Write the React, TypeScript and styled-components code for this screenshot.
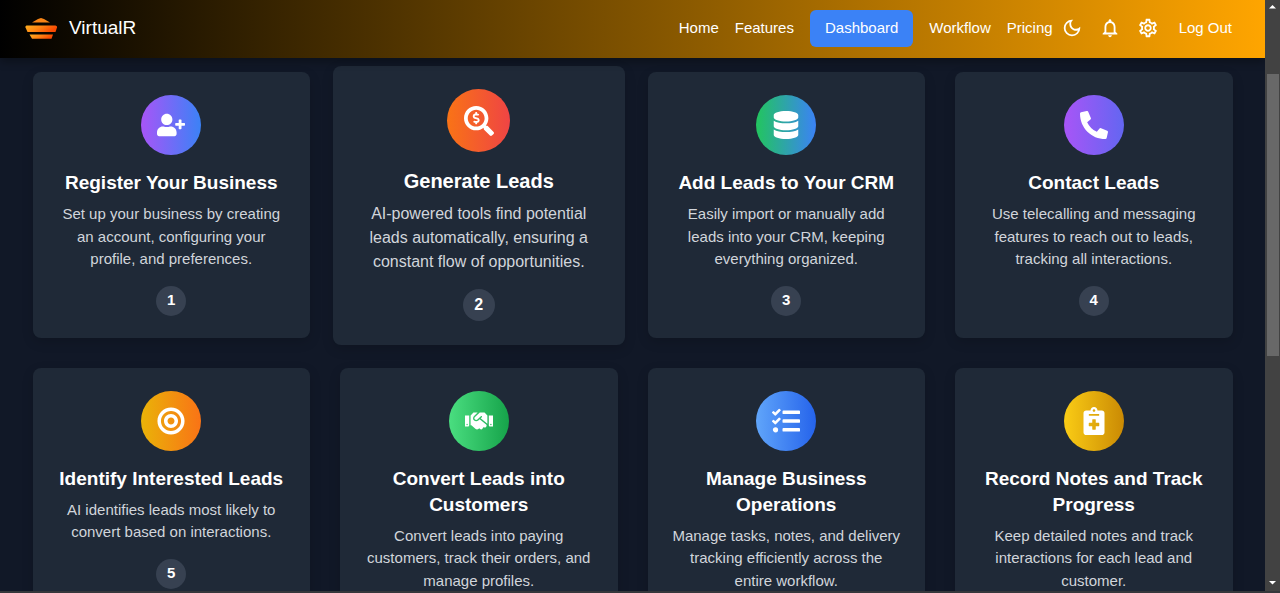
import React from "react";
import styled, { createGlobalStyle } from "styled-components";
import {
  FaBullseye,
  FaDatabase,
  FaHandshake,
  FaNotesMedical,
  FaPhoneAlt,
  FaSearchDollar,
  FaTasks,
  FaUserPlus,
} from "react-icons/fa";
import {
  MdNotificationsNone,
  MdOutlineDarkMode,
  MdOutlineSettings,
} from "react-icons/md";
import type { IconType } from "react-icons";

const GlobalStyle = createGlobalStyle`
  *, *::before, *::after { box-sizing: border-box; }
  body {
    margin: 0;
    background: #111827;
    color: #ffffff;
    font-family: "Liberation Sans", Arial, sans-serif;
    font-size: 15px;
    line-height: 1.5;
  }
  h3, p { margin: 0; }
`;

const Window = styled.div`
  display: flex;
  height: 100vh;
  overflow: hidden;
  border-bottom: 2px solid #35373b;
`;

const Page = styled.div`
  flex: 1;
  min-width: 0;
  display: flex;
  flex-direction: column;
  overflow: hidden;
`;

const Header = styled.header`
  z-index: 1;
  flex: none;
  display: flex;
  align-items: center;
  justify-content: space-between;
  height: 58px;
  padding: 0 33px 2px 24px;
  background: linear-gradient(to right, #000000, #ffa500);
  box-shadow: 0 4px 8px rgba(0, 0, 0, 0.3);
`;

const Brand = styled.a`
  display: flex;
  align-items: center;
  gap: 11px;
  color: #ffffff;
  font-size: 19px;
  line-height: 26px;
  text-decoration: none;
`;

const Nav = styled.nav`
  display: flex;
  align-items: center;
`;

const NavLinks = styled.div`
  display: flex;
  align-items: center;
  gap: 16px;
`;

const NavLink = styled.a<{ $active?: boolean }>`
  color: #ffffff;
  line-height: 22px;
  text-decoration: none;
  padding: ${(p) => (p.$active ? "7px 15px 8px" : "0")};
  border-radius: 6px;
  background: ${(p) => (p.$active ? "#3b82f6" : "transparent")};
`;

const Actions = styled.div`
  display: flex;
  align-items: center;
  gap: 16px;
  margin: 0 20px 0 8px;
`;

const ActionButton = styled.button`
  display: flex;
  padding: 0;
  border: 0;
  background: none;
  color: #ffffff;
  font: inherit;
  line-height: 22px;
  cursor: pointer;
`;

const Steps = styled.main`
  width: 100%;
  max-width: 1200px;
  margin: 0 auto;
  padding: 14px 0;
  display: grid;
  grid-template-columns: repeat(4, minmax(0, 1fr));
  gap: 30px;
`;

const Badge = styled.span`
  display: flex;
  align-items: center;
  justify-content: center;
  width: 30px;
  height: 30px;
  margin-top: 15px;
  border-radius: 50%;
  background: #374151;
  font-weight: 700;
`;

const IconDisc = styled.div<{ $from: string; $to: string }>`
  display: flex;
  align-items: center;
  justify-content: center;
  width: 60px;
  height: 60px;
  border-radius: 50%;
  background: linear-gradient(to right, ${(p) => p.$from}, ${(p) => p.$to});
  font-size: 28px;
`;

const Title = styled.h3`
  margin-top: 15px;
  font-size: 19px;
  line-height: 26px;
  font-weight: 700;
`;

const Description = styled.p`
  margin-top: 7px;
  color: #d1d5db;
`;

const Card = styled.article<{ $raised?: boolean }>`
  display: flex;
  flex-direction: column;
  align-items: center;
  padding: 23px 23px 22px;
  border-radius: 8px;
  background: #1f2937;
  box-shadow: 0 4px 12px rgba(0, 0, 0, 0.15);
  text-align: center;

  ${(p) =>
    p.$raised &&
    `
    margin: -6px -7px -7px;

    ${IconDisc} {
      width: 63px;
      height: 63px;
      font-size: 30px;
    }
    ${Title} {
      font-size: 20px;
      line-height: 28px;
    }
    ${Description} {
      font-size: 16px;
      line-height: 24px;
    }
    ${Badge} {
      width: 32px;
      height: 32px;
      font-size: 16px;
    }
  `}
`;

const ScrollRail = styled.div`
  flex: none;
  width: 15px;
  display: flex;
  flex-direction: column;
  align-items: center;
  background: #424242;
`;

const RailArrow = styled.svg`
  flex: none;
  width: 15px;
  height: 15px;
  fill: #ffffff;
`;

const RailTrack = styled.div`
  flex: 1;
  width: 12px;
  display: grid;
  grid-template-rows: 59fr 282fr 220fr;
`;

const RailThumb = styled.div`
  grid-row: 2;
  background: #686868;
`;

const Logo = () => (
  <svg width="34" height="28" viewBox="0 0 34 28" aria-hidden="true">
    <defs>
      <linearGradient id="logo" x1="0" y1="0" x2="1" y2="0.3">
        <stop offset="0" stopColor="#ffb020" />
        <stop offset="0.5" stopColor="#ff8412" />
        <stop offset="1" stopColor="#f94a02" />
      </linearGradient>
    </defs>
    <path d="M17 4 L20 5 L26 8.6 H8 L14 5 Z" fill="#f98516" />
    <path d="M2.5 11.5 H31.5 Q33.5 12 33 13.5 L31.5 18 H3.5 L1.5 13.5 Q1 12 2.5 11.5 Z" fill="url(#logo)" />
    <path d="M5.5 20.5 H29 L27.5 24.7 H8 Z" fill="url(#logo)" />
  </svg>
);

interface Step {
  title: string;
  text: string;
  icon: IconType;
  from: string;
  to: string;
  raised?: boolean;
}

const steps: Step[] = [
  {
    title: "Register Your Business",
    text: "Set up your business by creating an account, configuring your profile, and preferences.",
    icon: FaUserPlus,
    from: "#a855f7",
    to: "#3b82f6",
  },
  {
    title: "Generate Leads",
    text: "AI-powered tools find potential leads automatically, ensuring a constant flow of opportunities.",
    icon: FaSearchDollar,
    from: "#f97316",
    to: "#ef4444",
    raised: true,
  },
  {
    title: "Add Leads to Your CRM",
    text: "Easily import or manually add leads into your CRM, keeping everything organized.",
    icon: FaDatabase,
    from: "#22c55e",
    to: "#3b82f6",
  },
  {
    title: "Contact Leads",
    text: "Use telecalling and messaging features to reach out to leads, tracking all interactions.",
    icon: FaPhoneAlt,
    from: "#a855f7",
    to: "#6366f1",
  },
  {
    title: "Identify Interested Leads",
    text: "AI identifies leads most likely to convert based on interactions.",
    icon: FaBullseye,
    from: "#eab308",
    to: "#f97316",
  },
  {
    title: "Convert Leads into Customers",
    text: "Convert leads into paying customers, track their orders, and manage profiles.",
    icon: FaHandshake,
    from: "#4ade80",
    to: "#16a34a",
  },
  {
    title: "Manage Business Operations",
    text: "Manage tasks, notes, and delivery tracking efficiently across the entire workflow.",
    icon: FaTasks,
    from: "#60a5fa",
    to: "#2563eb",
  },
  {
    title: "Record Notes and Track Progress",
    text: "Keep detailed notes and track interactions for each lead and customer.",
    icon: FaNotesMedical,
    from: "#facc15",
    to: "#ca8a04",
  },
];

const links = ["Home", "Features", "Dashboard", "Workflow", "Pricing"];

export default function App() {
  return (
    <>
      <GlobalStyle />
      <Window>
        <Page>
          <Header>
            <Brand href="#">
              <Logo />
              VirtualR
            </Brand>
            <Nav>
              <NavLinks>
                {links.map((name) => (
                  <NavLink key={name} href="#" $active={name === "Dashboard"}>
                    {name}
                  </NavLink>
                ))}
              </NavLinks>
              <Actions>
                <ActionButton aria-label="Toggle theme">
                  <MdOutlineDarkMode size={22} />
                </ActionButton>
                <ActionButton aria-label="Notifications">
                  <MdNotificationsNone size={22} />
                </ActionButton>
                <ActionButton aria-label="Settings">
                  <MdOutlineSettings size={22} />
                </ActionButton>
              </Actions>
              <ActionButton>Log Out</ActionButton>
            </Nav>
          </Header>
          <Steps>
            {steps.map(({ title, text, icon: Icon, from, to, raised }, i) => (
              <Card key={title} $raised={raised}>
                <IconDisc $from={from} $to={to}>
                  <Icon />
                </IconDisc>
                <Title>{title}</Title>
                <Description>{text}</Description>
                <Badge>{i + 1}</Badge>
              </Card>
            ))}
          </Steps>
        </Page>
        <ScrollRail aria-hidden="true">
          <RailArrow viewBox="0 0 15 15">
            <path d="M7.5 5 L11 8.5 H4 Z" />
          </RailArrow>
          <RailTrack>
            <RailThumb />
          </RailTrack>
          <RailArrow viewBox="0 0 15 15">
            <path d="M4 5 H11 L7.5 8.5 Z" />
          </RailArrow>
        </ScrollRail>
      </Window>
    </>
  );
}
